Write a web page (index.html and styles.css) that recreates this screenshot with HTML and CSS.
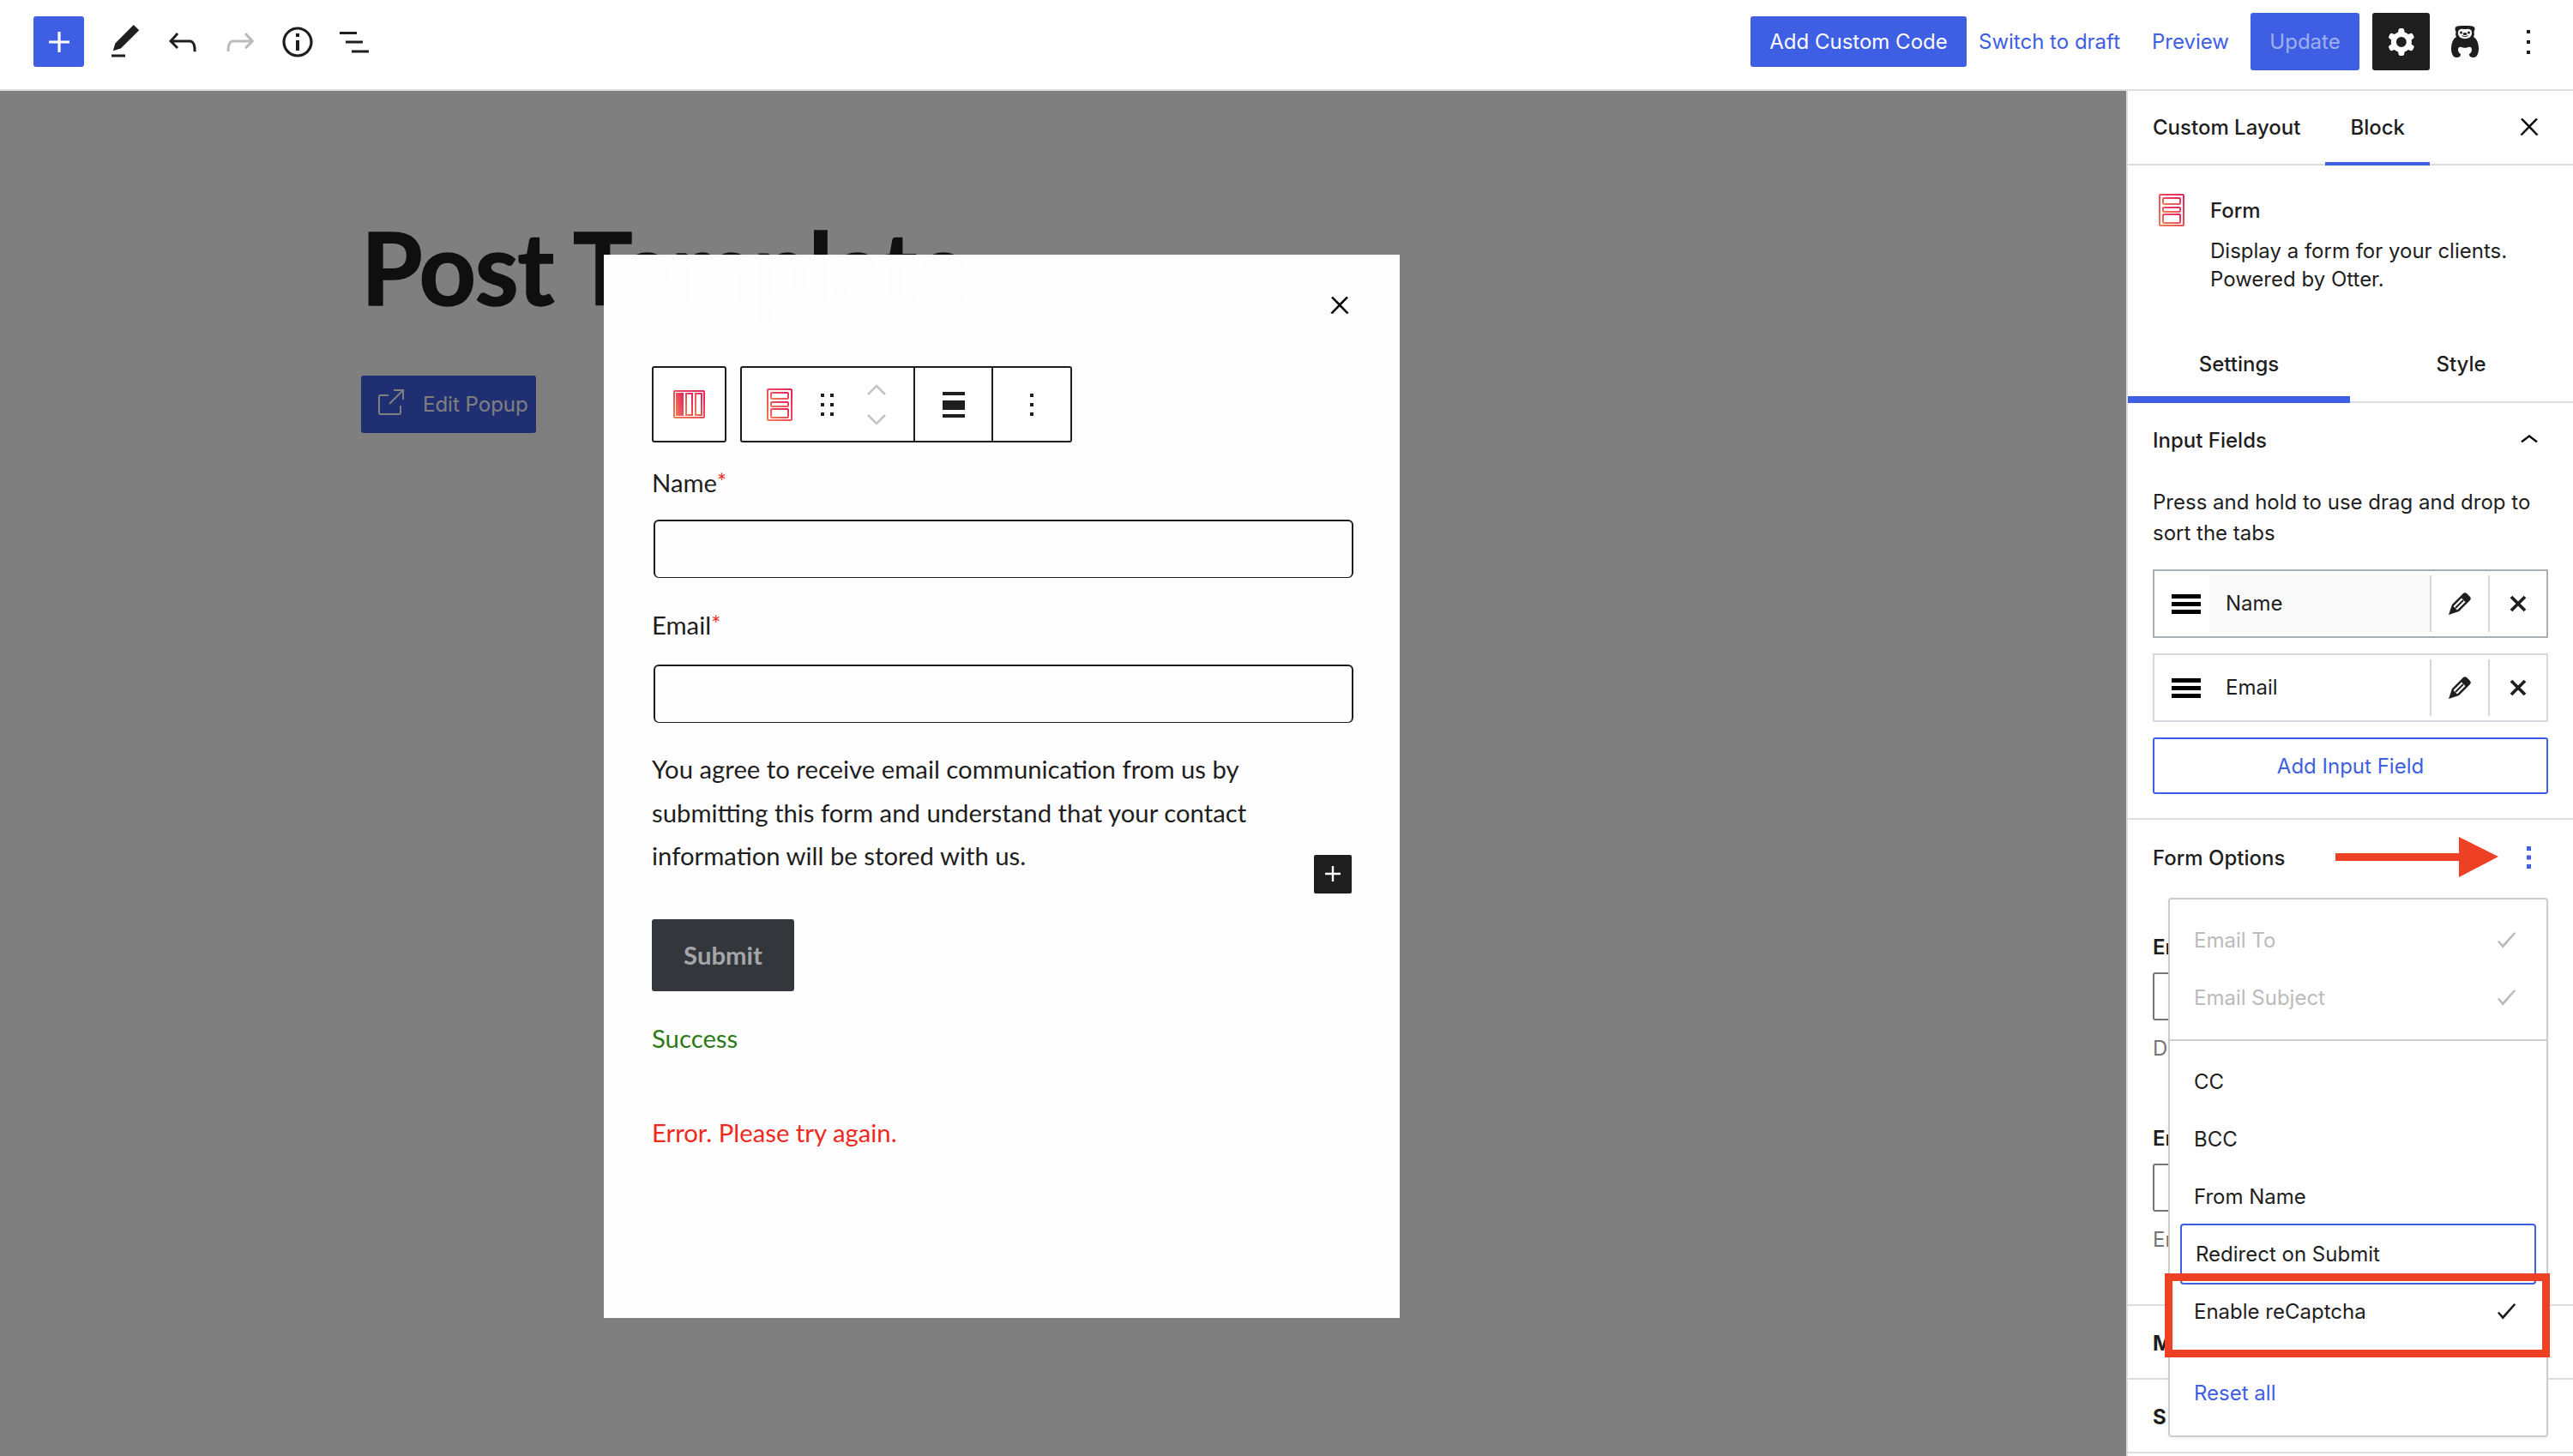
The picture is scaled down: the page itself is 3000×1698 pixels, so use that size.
FILE: index.html
```html
<!DOCTYPE html>
<html lang="en">
<head>
    <meta charset="UTF-8">
    <title>Post Template</title>
    <link rel="stylesheet" href="styles.css">
</head>
<body>
    <svg class="defs" width="0" height="0">
        <defs>
            <linearGradient id="otter" x1="0" y1="1" x2="1" y2="0">
                <stop offset="0" stop-color="#ee7a55"/>
                <stop offset="1" stop-color="#e5245f"/>
            </linearGradient>
        </defs>
    </svg>

    <header class="topbar">
        <button class="add-btn">
            <svg viewBox="0 0 24 24" width="48" height="48"><path d="M18 11.2h-5.2V6h-1.6v5.2H6v1.6h5.2V18h1.6v-5.2H18z"/></svg>
        </button>
        <div class="tools">
            <svg viewBox="0 0 24 24" width="48" height="48"><path d="M20.1 5.1L16.9 2 6.2 12.7l-1.3 4.4 4.5-1.3L20.1 5.1zM4 20.8h8v-1.5H4v1.5z"/></svg>
            <svg viewBox="0 0 24 24" width="48" height="48"><path d="M18.3 11.7c-.6-.6-1.4-.9-2.3-.9H6.7l2.9-3.3-1.1-1-4.5 5L8.5 16l1-1-2.7-2.7H16c.5 0 .9.2 1.3.5 1 1 1 3.4 1 4.5v.3h1.5v-.2c0-1.5 0-4.3-1.5-5.7z"/></svg>
            <svg class="muted" viewBox="0 0 24 24" width="48" height="48"><path d="M15.6 6.5l-1.1 1 2.9 3.3H8c-.9 0-1.7.3-2.3.9-1.4 1.5-1.4 4.2-1.4 5.6v.2h1.5v-.3c0-1.1 0-3.5 1-4.5.3-.3.7-.5 1.3-.5h9.2L14.5 15l1.1 1.1 4.6-4.6-4.6-5z"/></svg>
            <svg viewBox="0 0 24 24" width="48" height="48"><path d="M12 3.2c-4.8 0-8.8 3.9-8.8 8.8 0 4.8 3.9 8.8 8.8 8.8 4.8 0 8.8-3.9 8.8-8.8 0-4.8-4-8.8-8.8-8.8zm0 16c-4 0-7.2-3.3-7.2-7.2C4.8 8 8 4.8 12 4.8s7.2 3.3 7.2 7.2c0 4-3.2 7.2-7.2 7.2zM11 17h2v-6h-2v6zm0-8h2V7h-2v2z"/></svg>
            <svg viewBox="0 0 24 24" width="48" height="48"><path d="M3 6h10v1.5H3V6zm3.5 5.3h10v1.5h-10v-1.5zM20 16.7H10v1.5h10v-1.5z"/></svg>
        </div>
        <div class="actions">
            <button class="btn-code">Add Custom Code</button>
            <a class="link link-draft">Switch to draft</a>
            <a class="link link-preview">Preview</a>
            <button class="btn-update">Update</button>
            <button class="btn-gear">
                <svg viewBox="0 0 24 24" width="48" height="48"><path fill-rule="evenodd" d="M10.289 4.836A1 1 0 0111.275 4h1.306a1 1 0 01.987.836l.244 1.466c.787.26 1.503.679 2.108 1.218l1.393-.522a1 1 0 011.216.437l.653 1.13a1 1 0 01-.23 1.273l-1.148.944a6.025 6.025 0 010 2.435l1.149.946a1 1 0 01.23 1.272l-.653 1.13a1 1 0 01-1.216.437l-1.394-.522c-.605.54-1.32.958-2.108 1.218l-.244 1.466a1 1 0 01-.987.836h-1.306a1 1 0 01-.986-.836l-.244-1.466a5.995 5.995 0 01-2.108-1.218l-1.394.522a1 1 0 01-1.217-.436l-.653-1.131a1 1 0 01.23-1.272l1.149-.946a6.026 6.026 0 010-2.435l-1.148-.944a1 1 0 01-.23-1.272l.653-1.131a1 1 0 011.217-.437l1.393.522a5.994 5.994 0 012.108-1.218l.244-1.466zM14.929 12a3 3 0 11-6 0 3 3 0 016 0z"/></svg>
            </button>
            <svg class="penguin" viewBox="0 0 32 38" width="32" height="38">
                <path fill="#1e1e1e" d="M6 1C9-.5 23-.5 26 1c2 1 2 4 .5 6 .5 3 .5 4-.5 6 4 2 6 8 6 14 0 5-2 10-6 10-3 0-5-1-5-4 2-1 3-3 3-5 0-3-2-4-4-3-2 1-6 1-8 0-2-1-4 0-4 3 0 2 1 4 3 5 0 3-2 4-5 4-4 0-6-5-6-10 0-6 2-12 6-14-1-2-1-3-.5-6C4 5 4 2 6 1z"/>
                <path fill="#fff" d="M16 4c-3 0-4-1-7 1-2 3-1 7 2 9 3 1.500 7 1.500 10 0 3-2 4-6 2-9-3-2-4-1-7-1z"/>
                <circle cx="11.500" cy="8" r="1.500" fill="#1e1e1e"/>
                <circle cx="20.500" cy="8" r="1.500" fill="#1e1e1e"/>
                <ellipse cx="16" cy="9.500" rx="2.500" ry="1.500" fill="#1e1e1e"/>
                <path fill="none" stroke="#1e1e1e" stroke-width="1" d="M12.500 11.500c2 1.500 5 1.500 7 0"/>
            </svg>
            <svg class="more" viewBox="0 0 24 24" width="48" height="48"><path d="M13 19h-2v-2h2v2zm0-6h-2v-2h2v2zm0-6h-2V5h2v2z"/></svg>
        </div>
    </header>

    <div class="main">
        <div class="canvas">
            <h1 class="post-title">Post Template</h1>
            <button class="popup-btn">
                <svg viewBox="0 0 30 30" width="30" height="30" fill="none" stroke="currentColor" stroke-width="2"><path d="M12 7H3a2 2 0 0 0-2 2v18a2 2 0 0 0 2 2h21a2 2 0 0 0 2-2v-8"/><path d="M13 17L29 1M18 1h11v11"/></svg>
                <span>Edit Popup</span>
            </button>
            <div class="overlay"></div>

            <div class="modal">
                <div class="modal-close">
                    <svg viewBox="0 0 24 24" width="32" height="32"><path d="M13 11.800l6.100-6.300-1-1-6.100 6.200-6.100-6.200-1 1 6.100 6.300-6.500 6.700 1 1 6.500-6.600 6.500 6.600 1-1z" stroke="#000" stroke-width=".6"/></svg>
                </div>
                <div class="block-tools">
                    <div class="tool-group tool-parent">
                        <svg viewBox="0 0 37 33" width="37" height="33" fill="none" stroke="url(#otter)" stroke-width="2"><rect x="1" y="1" width="35" height="31" rx="1"/><rect x="4" y="4" width="7" height="25" fill="url(#otter)"/><rect x="15" y="4" width="7" height="25"/><rect x="26" y="4" width="7" height="25"/></svg>
                    </div>
                    <div class="tool-group">
                        <div class="tool-cell cell-mover">
                            <svg viewBox="0 0 30 38" width="30" height="38" fill="none" stroke="url(#otter)" stroke-width="2"><rect x="1" y="1" width="28" height="36" rx="1"/><rect x="5" y="5" width="20" height="7" rx="1"/><rect x="5" y="16" width="20" height="5" rx="1"/><rect x="5" y="24" width="20" height="10" rx="1"/></svg>
                            <svg class="drag" viewBox="0 0 16 26" width="16" height="26" fill="#1e1e1e"><rect width="4" height="4"/><rect x="11" width="4" height="4"/><rect y="11" width="4" height="4"/><rect x="11" y="11" width="4" height="4"/><rect y="22" width="4" height="4"/><rect x="11" y="22" width="4" height="4"/></svg>
                            <div class="movers">
                                <svg viewBox="0 0 22 14" width="22" height="14" fill="none" stroke="#c4c4c4" stroke-width="2.500"><path d="M1 12l10-10 10 10"/></svg>
                                <svg viewBox="0 0 22 14" width="22" height="14" fill="none" stroke="#c4c4c4" stroke-width="2.500"><path d="M1 2l10 10 10-10"/></svg>
                            </div>
                        </div>
                        <div class="tool-cell cell-align">
                            <svg viewBox="0 0 26 30" width="26" height="30" fill="#1e1e1e"><rect width="26" height="4"/><rect y="10" width="26" height="11"/><rect y="26" width="26" height="4"/></svg>
                        </div>
                        <div class="tool-cell cell-more">
                            <svg viewBox="0 0 4 26" width="4" height="26" fill="#1e1e1e"><rect width="4" height="4"/><rect y="11" width="4" height="4"/><rect y="22" width="4" height="4"/></svg>
                        </div>
                    </div>
                </div>

                <label class="field-label label-name">Name<span class="req">*</span></label>
                <div class="field-input"></div>
                <label class="field-label label-email">Email<span class="req">*</span></label>
                <div class="field-input"></div>

                <p class="consent">You agree to receive email communication from us by submitting this form and understand that your contact information will be stored with us.</p>
                <div class="submit-row">
                    <button class="submit">Submit</button>
                    <span class="inserter">
                        <svg viewBox="0 0 24 24" width="36" height="36"><path d="M18 11.200h-5.200V6h-1.600v5.200H6v1.600h5.200V18h1.600v-5.200H18z"/></svg>
                    </span>
                </div>
                <p class="msg-success">Success</p>
                <p class="msg-error">Error. Please try again.</p>
            </div>
        </div>

        <aside class="sidebar">
            <div class="side-head">
                <span class="side-tab">Custom Layout</span>
                <span class="side-tab side-tab-active">Block</span>
                <svg class="side-close" viewBox="0 0 24 24" width="32" height="32"><path d="M13 11.800l6.100-6.300-1-1-6.100 6.200-6.100-6.200-1 1 6.100 6.300-6.500 6.700 1 1 6.500-6.600 6.500 6.600 1-1z" stroke="#1e1e1e" stroke-width=".6"/></svg>
            </div>
            <div class="block-card">
                <svg viewBox="0 0 30 38" width="30" height="38" fill="none" stroke="url(#otter)" stroke-width="2"><rect x="1" y="1" width="28" height="36" rx="1"/><rect x="5" y="5" width="20" height="7" rx="1"/><rect x="5" y="16" width="20" height="5" rx="1"/><rect x="5" y="24" width="20" height="10" rx="1"/></svg>
                <div class="card-text">
                    <h2>Form</h2>
                    <p>Display a form for your clients.<br>Powered by Otter.</p>
                </div>
            </div>
            <div class="sub-tabs">
                <span class="sub-tab sub-tab-active">Settings</span>
                <span class="sub-tab">Style</span>
            </div>

            <section class="panel panel-inputs">
                <div class="panel-title">
                    <span>Input Fields</span>
                    <svg viewBox="0 0 24 24" width="36" height="36"><path d="M5.500 13L12 8l6.500 5-1 1.200L12 10l-5.500 4.200z"/></svg>
                </div>
                <p class="panel-help">Press and hold to use drag and drop to sort the tabs</p>
                <div class="field-row field-row-active">
                    <span class="burger"><i></i><i></i><i></i></span>
                    <span class="row-name">Name</span>
                    <span class="row-btn"><svg viewBox="0 0 26 26" width="26" height="26"><path fill-rule="evenodd" fill="#1e1e1e" d="M0 26L4 14 17 1c1-1 3-1 4 0l4 4c1 1 1 3 0 4L12 22zM5.500 16l4.500 4.500 9.500-9.500L15 6.500z"/><path stroke="#1e1e1e" stroke-width="2" d="M8 18l9-9"/></svg></span>
                    <span class="row-btn"><svg viewBox="0 0 20 20" width="20" height="20" stroke="#1e1e1e" stroke-width="3.800"><path d="M2 2l16 16M18 2L2 18"/></svg></span>
                </div>
                <div class="field-row">
                    <span class="burger"><i></i><i></i><i></i></span>
                    <span class="row-name">Email</span>
                    <span class="row-btn"><svg viewBox="0 0 26 26" width="26" height="26"><path fill-rule="evenodd" fill="#1e1e1e" d="M0 26L4 14 17 1c1-1 3-1 4 0l4 4c1 1 1 3 0 4L12 22zM5.500 16l4.500 4.500 9.500-9.500L15 6.500z"/><path stroke="#1e1e1e" stroke-width="2" d="M8 18l9-9"/></svg></span>
                    <span class="row-btn"><svg viewBox="0 0 20 20" width="20" height="20" stroke="#1e1e1e" stroke-width="3.800"><path d="M2 2l16 16M18 2L2 18"/></svg></span>
                </div>
                <button class="add-field">Add Input Field</button>
            </section>

            <section class="panel panel-options">
                <div class="options-title">
                    <span>Form Options</span>
                    <svg class="options-more" viewBox="0 0 6 26" width="6" height="26" fill="#3e5ee3"><rect width="5" height="5"/><rect y="10.500" width="5" height="5"/><rect y="21" width="5" height="5"/></svg>
                </div>
                <div class="option-field option-first">
                    <b>Email To</b>
                    <div class="option-input"></div>
                    <small>Default</small>
                </div>
                <div class="option-field">
                    <b>Email Subject</b>
                    <div class="option-input"></div>
                    <small>Enter</small>
                </div>
            </section>
            <section class="panel panel-closed"><b>M</b></section>
            <section class="panel panel-closed"><b>S</b></section>

            <!-- annotation arrow from the screenshot -->
            <svg class="note-arrow" viewBox="0 0 190 47" width="190" height="47"><path fill="#ee4025" d="M0 19h144V0l46 23-46 24V28H0z"/></svg>

            <div class="menu">
                <div class="menu-group menu-group-top">
                    <div class="menu-item is-locked">Email To<svg viewBox="0 0 24 24" width="30" height="30"><path d="M4 13l1.400-1.200L9 15.500 19.500 4 21 5.200 9 19z"/></svg></div>
                    <div class="menu-item is-locked">Email Subject<svg viewBox="0 0 24 24" width="30" height="30"><path d="M4 13l1.400-1.200L9 15.500 19.500 4 21 5.200 9 19z"/></svg></div>
                </div>
                <div class="menu-group">
                    <div class="menu-item">CC</div>
                    <div class="menu-item">BCC</div>
                    <div class="menu-item">From Name</div>
                    <div class="menu-item is-focus">Redirect on Submit</div>
                    <div class="menu-item">Enable reCaptcha<svg viewBox="0 0 24 24" width="30" height="30"><path d="M4 13l1.400-1.200L9 15.500 19.500 4 21 5.200 9 19z"/></svg></div>
                </div>
                <div class="menu-reset">Reset all</div>
            </div>
            <div class="note-box"></div>
        </aside>
    </div>
</body>
</html>
```

FILE: styles.css
```css
* {
    box-sizing: border-box;
}

html, body {
    margin: 0;
    height: 100%;
}

body {
    width: 3000px;
    height: 1698px;
    overflow: hidden;
    background: #fff;
    color: #1e1e1e;
    font-family: Inter, "Liberation Sans", sans-serif;
    font-size: 24px;
}

button {
    font: inherit;
    border: none;
    cursor: pointer;
}

p, h1, h2 {
    margin: 0;
}

.defs {
    position: absolute;
}

/* top bar */
.topbar {
    height: 106px;
    border-bottom: 2px solid #ddd;
    display: flex;
    align-items: center;
    padding: 0 28px 7px 39px;
}

.add-btn {
    width: 59px;
    height: 59px;
    padding: 0;
    border-radius: 3px;
    background: #3e5ee3;
    display: flex;
    align-items: center;
    justify-content: center;
}

.add-btn svg {
    fill: #fff;
}

.tools {
    display: flex;
    gap: 19px;
    margin-left: 24px;
}

.tools svg {
    fill: #1e1e1e;
}

.tools .muted {
    fill: #bbb;
}

.actions {
    margin-left: auto;
    display: flex;
    align-items: center;
}

.btn-code {
    width: 252px;
    height: 59px;
    border-radius: 3px;
    background: #3e5ee3;
    color: #fff;
    padding: 0;
}

.link {
    color: #3e5ee3;
}

.link-draft {
    margin-left: 14px;
}

.link-preview {
    margin-left: 37px;
}

.btn-update {
    width: 127px;
    height: 67px;
    margin-left: 25px;
    border-radius: 3px;
    background: #3e5ee3;
    color: #9fafef;
    padding: 0;
}

.btn-gear {
    width: 67px;
    height: 67px;
    margin-left: 15px;
    padding: 0;
    border-radius: 3px;
    background: #1e1e1e;
    display: flex;
    align-items: center;
    justify-content: center;
}

.btn-gear svg {
    fill: #fff;
}

.penguin {
    margin-left: 25px;
}

.more {
    margin-left: 34px;
    fill: #1e1e1e;
}

/* editor canvas */
.main {
    display: flex;
    height: 1592px;
}

.canvas {
    position: relative;
    width: 2479px;
    padding: 141px 0 0 421px;
    overflow: hidden;
}

.post-title {
    font-family: Lato, sans-serif;
    font-size: 116px;
    font-weight: 700;
    line-height: 130px;
    letter-spacing: -1.500px;
    -webkit-text-stroke: 1.500px #1e1e1e;
    color: #1e1e1e;
}

.popup-btn {
    width: 204px;
    height: 67px;
    margin-top: 61px;
    border-radius: 3px;
    background: #3e5ee3;
    color: #fff;
    display: flex;
    align-items: center;
    gap: 22px;
    padding: 0 0 0 20px;
    white-space: nowrap;
}

.popup-btn svg {
    flex-shrink: 0;
    margin-top: -6px;
}

.overlay {
    position: absolute;
    inset: 0;
    background: rgba(0, 0, 0, .5);
}

.modal {
    position: absolute;
    left: 704px;
    top: 191px;
    width: 928px;
    height: 1240px;
    padding: 0 54px 0 56px;
    background: rgba(255, 255, 255, .992);
    font-family: Lato, "Liberation Sans", sans-serif;
    font-size: 29.300px;
}

.modal-close {
    display: flex;
    justify-content: flex-end;
    height: 36px;
    margin: 43px 0 0 0;
}

.block-tools {
    display: flex;
    gap: 16px;
    margin-top: 51px;
}

.tool-group {
    display: flex;
    height: 89px;
    border: 2px solid #1e1e1e;
    border-radius: 3px;
    background: #fff;
}

.tool-parent {
    width: 87px;
    align-items: center;
    justify-content: center;
}

.tool-cell {
    height: 100%;
    display: flex;
    align-items: center;
}

.cell-mover {
    width: 202px;
    padding-left: 29px;
    border-right: 2px solid #1e1e1e;
}

.drag {
    margin-left: 33px;
}

.movers {
    display: flex;
    flex-direction: column;
    gap: 20px;
    margin-left: 38px;
}

.cell-align {
    width: 91px;
    justify-content: center;
    border-right: 2px solid #1e1e1e;
}

.cell-more {
    width: 90px;
    justify-content: center;
}

.field-label {
    display: block;
    line-height: 36px;
}

.label-name {
    margin-top: 28px;
}

.label-email {
    margin-top: 36px;
}

.req {
    color: #f0291f;
    font-size: 26px;
    vertical-align: 2px;
}

.field-input {
    width: 816px;
    height: 68px;
    margin: 25px 0 0 2px;
    border: 2px solid #1e1e1e;
    border-bottom-width: 1.500px;
    border-radius: 6px;
}

.label-email + .field-input {
    margin-top: 28px;
}

.consent {
    width: 740px;
    margin-top: 29px;
    line-height: 50.500px;
}

.submit-row {
    display: flex;
    align-items: flex-start;
    justify-content: space-between;
    height: 84px;
    margin-top: 48px;
    padding-right: 2px;
}

.submit {
    width: 166px;
    height: 84px;
    padding: 0;
    border-radius: 3px;
    background: #33363b;
    color: #a4a6a9;
    font-weight: 700;
}

.inserter {
    width: 44px;
    height: 45px;
    margin-top: -75px;
    border-radius: 2px;
    background: #1e1e1e;
    display: flex;
    align-items: center;
    justify-content: center;
}

.inserter svg {
    fill: #fff;
}

.msg-success {
    margin-top: 37px;
    line-height: 36px;
    color: #2c7a17;
}

.msg-error {
    margin-top: 74px;
    line-height: 36px;
    color: #f0291f;
}

/* sidebar */
.sidebar {
    position: relative;
    width: 521px;
    border-left: 2px solid #ddd;
    overflow: hidden;
}

.side-head {
    display: flex;
    align-items: stretch;
    height: 87px;
    padding-left: 29px;
    border-bottom: 2px solid #ddd;
    font-weight: 500;
}

.side-tab {
    line-height: 85px;
}

.side-tab-active {
    position: relative;
    margin-left: 58px;
}

.side-tab-active::after {
    content: "";
    position: absolute;
    left: -29px;
    right: -29px;
    bottom: -2px;
    height: 4px;
    background: #3e5ee3;
}

.side-close {
    margin: 26px 35px 0 auto;
}

.block-card {
    display: flex;
    gap: 30px;
    height: 190px;
    padding: 33px 29px 0 36px;
}

.block-card svg {
    flex-shrink: 0;
}

.card-text {
    line-height: 33px;
}

.card-text h2 {
    font-size: 24px;
    font-weight: 500;
    line-height: 40px;
    margin-bottom: 10px;
}

.sub-tabs {
    display: flex;
    height: 87px;
    border-bottom: 2px solid #ddd;
    font-weight: 500;
}

.sub-tab {
    flex: 0 0 259px;
    text-align: center;
    line-height: 84px;
}

.sub-tab-active {
    border-bottom: 8px solid #3e5ee3;
    height: 87px;
}

.panel {
    border-bottom: 2px solid #ddd;
    padding: 0 29px;
}

.panel-inputs {
    height: 486px;
}

.panel-title {
    display: flex;
    align-items: center;
    justify-content: space-between;
    height: 86px;
    font-weight: 500;
}

.panel-title svg {
    margin-right: 4px;
}

.panel-help {
    line-height: 36px;
    margin-top: 12px;
}

.field-row {
    display: flex;
    height: 80px;
    margin-top: 18px;
    padding: 5px 0 5px 20px;
    border: 2px solid #d5d9dd;
    align-items: stretch;
}

.field-row-active {
    margin-top: 24px;
    border-color: #a7aeb4;
}

.burger {
    width: 44px;
    display: flex;
    flex-direction: column;
    justify-content: center;
    gap: 4px;
}

.burger i {
    display: block;
    width: 34px;
    height: 5px;
    background: #000;
}

.row-name {
    flex: 1;
    padding-left: 19px;
    line-height: 66px;
}

.field-row-active .row-name {
    background: #f9f9f9;
}

.row-btn {
    width: 68px;
    display: flex;
    align-items: center;
    justify-content: center;
    border-left: 2px solid #d5d9dd;
}

.add-field {
    display: block;
    width: 100%;
    height: 66px;
    margin-top: 18px;
    border: 2px solid #3e5ee3;
    border-radius: 3px;
    background: #fff;
    color: #3e5ee3;
}

.panel-options {
    height: 567px;
}

.options-title {
    display: flex;
    align-items: center;
    justify-content: space-between;
    height: 88px;
    font-weight: 500;
}

.options-more {
    margin-right: 19px;
}

.option-field b {
    display: block;
    line-height: 30px;
    font-weight: 600;
}

.option-first {
    margin-top: 46px;
}

.option-field {
    height: 223px;
}

.option-input {
    width: 100%;
    height: 56px;
    margin-top: 14px;
    border: 2px solid #757575;
    border-radius: 3px;
}

.option-field small {
    display: block;
    margin-top: 18px;
    font-size: 24px;
    color: #757575;
}

.panel-closed {
    height: 86px;
    line-height: 88px;
}

.note-arrow {
    position: absolute;
    left: 242px;
    top: 870px;
}

.menu {
    position: absolute;
    left: 47px;
    top: 941px;
    width: 443px;
    height: 629px;
    background: #fff;
    border: 2px solid #ccc;
    border-radius: 4px;
    box-shadow: 0 2px 6px rgba(0, 0, 0, .05);
}

.menu-group-top {
    height: 165px;
    padding-top: 14px;
    border-bottom: 2px solid #ccc;
}

.menu-group {
    padding-top: 14px;
}

.menu-group-top .menu-item svg {
    fill: #bbb;
}

.menu-item {
    position: relative;
    display: flex;
    align-items: center;
    justify-content: space-between;
    height: 67px;
    padding: 0 32px 0 28px;
}

.menu-item svg {
    fill: #1e1e1e;
}

.is-locked {
    color: #bbb;
}

.is-focus {
    margin: -2px 12px;
    padding-left: 16px;
    height: 71px;
    border: 2px solid #3e5ee3;
    border-radius: 4px;
}

.menu-reset {
    padding: 47px 0 0 28px;
    color: #3e5ee3;
}

.note-box {
    position: absolute;
    left: 43px;
    top: 1379px;
    width: 449px;
    height: 98px;
    border: 9px solid #ee4025;
}
```
